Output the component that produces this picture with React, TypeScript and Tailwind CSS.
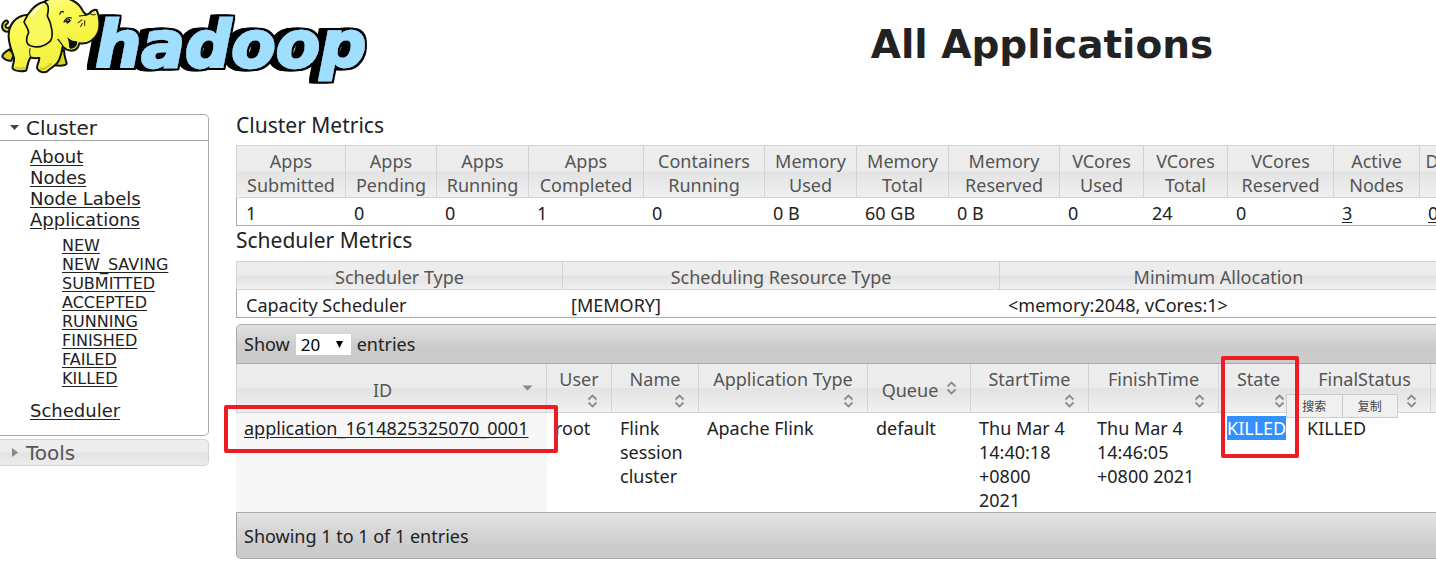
import type { ReactNode } from "react";

const clusterMetrics: { label: [string, string]; value: string; width: string; link?: boolean }[] = [
  { label: ["Apps", "Submitted"], value: "1", width: "w-[110px]" },
  { label: ["Apps", "Pending"], value: "0", width: "w-[91px]" },
  { label: ["Apps", "Running"], value: "0", width: "w-[92px]" },
  { label: ["Apps", "Completed"], value: "1", width: "w-[115px]" },
  { label: ["Containers", "Running"], value: "0", width: "w-[121px]" },
  { label: ["Memory", "Used"], value: "0 B", width: "w-[92px]" },
  { label: ["Memory", "Total"], value: "60 GB", width: "w-[92px]" },
  { label: ["Memory", "Reserved"], value: "0 B", width: "w-[111px]" },
  { label: ["VCores", "Used"], value: "0", width: "w-[84px]" },
  { label: ["VCores", "Total"], value: "24", width: "w-[84px]" },
  { label: ["VCores", "Reserved"], value: "0", width: "w-[106px]" },
  { label: ["Active", "Nodes"], value: "3", width: "w-[86px]", link: true },
  { label: ["Decommissioned", "Nodes"], value: "0", width: "w-[158px]", link: true },
  { label: ["Lost", "Nodes"], value: "0", width: "", link: true },
];

const schedulerMetrics = [
  { label: "Scheduler Type", value: "Capacity Scheduler", width: "w-[327px]" },
  { label: "Scheduling Resource Type", value: "[MEMORY]", width: "w-[437px]" },
  { label: "Minimum Allocation", value: "<memory:2048, vCores:1>", width: "w-[438px]" },
  { label: "Maximum Allocation", value: "<memory:8192, vCores:4>", width: "" },
];

const appColumns: { label: string; width: string; inline?: boolean; sorted?: boolean }[] = [
  { label: "ID", width: "w-[311px]", inline: true, sorted: true },
  { label: "User", width: "w-[65px]" },
  { label: "Name", width: "w-[87px]" },
  { label: "Application Type", width: "w-[169px]" },
  { label: "Queue", width: "w-[103px]", inline: true },
  { label: "StartTime", width: "w-[118px]" },
  { label: "FinishTime", width: "w-[130px]" },
  { label: "State", width: "w-[80px]" },
  { label: "FinalStatus", width: "w-[132px]" },
  { label: "Progress", width: "" },
];

const appStates = ["NEW", "NEW_SAVING", "SUBMITTED", "ACCEPTED", "RUNNING", "FINISHED", "FAILED", "KILLED"];

const headCell =
  "border-y border-r first:border-l border-[#d3d3d3] bg-[linear-gradient(#ededed_0%,#ececec_48%,#e3e3e3_52%,#f0f0f0_100%)] font-normal text-[#555]";
const valueCell = "h-7 border-b border-[#aaa] pt-[3px] pb-0 pl-2 first:border-l first:pl-[9px]";

function HadoopLogo() {
  return (
    <svg viewBox="0 0 1140 258" className="h-[86px] w-[380px] shrink-0" role="img" aria-label="hadoop">
      <defs>
        <linearGradient id="skin" x1="0" y1="0" x2="0.5" y2="1">
          <stop offset="0" stopColor="#ffffb8" />
          <stop offset="0.4" stopColor="#fbfb52" />
          <stop offset="1" stopColor="#efee3c" />
        </linearGradient>
        <filter id="extrude" x="-10%" y="-20%" width="120%" height="150%">
          <feMorphology in="SourceAlpha" operator="dilate" radius="7" result="d" />
          <feOffset in="d" dx="-6" result="d1" />
          <feOffset in="d" dx="-12" result="d2" />
          <feOffset in="d" dx="-18" result="d3" />
          <feOffset in="d" dx="-22" result="d4" />
          <feMerge>
            <feMergeNode in="d4" />
            <feMergeNode in="d3" />
            <feMergeNode in="d2" />
            <feMergeNode in="d1" />
            <feMergeNode in="d" />
            <feMergeNode in="SourceGraphic" />
          </feMerge>
        </filter>
      </defs>
      <text
        x="286"
        y="202"
        fontFamily="DejaVu Sans"
        fontWeight="700"
        fontStyle="italic"
        fontSize="194"
        fill="#a0deff"
        stroke="#a0deff"
        strokeWidth="7"
        filter="url(#extrude)"
      >
        hadoop
      </text>
      <g stroke="#111" strokeWidth="6" strokeLinejoin="round" strokeLinecap="round">
        <path d="M26 94C14 98 4 88 7 74C9 66 16 60 22 62C27 66 23 72 17 74C15 82 20 86 29 82" fill="#e6e23c" />
        <path d="M28 148C18 154 6 164 7 170C12 178 24 184 34 182L42 164Z" fill="#d9d527" />
        <path d="M170 160L192 150C192 168 198 182 200 190C200 198 178 198 164 196Z" fill="#d9d527" />
        <path
          d="M84 44C46 46 24 76 26 112C28 140 38 158 42 174C44 186 36 196 38 206C46 214 66 214 78 212C84 200 82 184 92 172C102 176 112 174 118 174C118 188 108 196 112 206C118 216 132 220 142 214C156 200 172 196 178 178C184 164 186 150 188 140C202 154 222 156 232 144C236 140 236 134 238 130C264 134 288 118 296 92C300 70 298 46 290 30C282 28 274 34 268 40C262 46 254 44 248 32C236 4 204 -8 176 -8C154 -8 140 0 132 6C112 8 96 26 84 44Z"
          fill="url(#skin)"
        />
        <path
          d="M134 6C110 10 84 36 72 66C80 82 86 88 86 98C76 118 78 134 94 138C112 144 132 140 150 124C162 112 156 72 142 48C146 28 148 14 134 6Z"
          fill="#f9f85c"
          strokeWidth="5"
        />
        <path d="M174 118C182 128 188 134 190 141" fill="none" strokeWidth="4" />
        <path d="M206 118C214 124 224 126 230 126C230 138 222 145 211 144C207 138 211 130 206 118Z" fill="#111" strokeWidth="4" />
        <path d="M203 114L210 122M268 40C272 44 282 46 286 44M238 48L258 46M234 68L246 60M242 80L247 70M254 76L254 62M92 172C88 160 88 152 90 146" fill="none" strokeWidth="3" />
        <path d="M180 42C180 36 186 32 190 36M192 66C196 56 204 50 214 54" fill="none" strokeWidth="4" />
        <path d="M196 64C200 56 210 56 212 62L204 70Z" fill="#111" strokeWidth="2" />
        <circle cx="204" cy="61" r="2" fill="#fff" stroke="none" />
      </g>
      <g fill="none" strokeLinecap="round">
        <path d="M96 48C104 32 114 22 126 16" stroke="#fff" strokeWidth="7" opacity=".7" />
        <path d="M48 204C56 207 64 206 72 204M122 206C132 210 142 202 152 192" stroke="#d2cc25" strokeWidth="7" />
      </g>
    </svg>
  );
}

function SortIcon({ sorted }: { sorted?: boolean }) {
  return (
    <svg viewBox="0 0 18 16" className="h-4 w-[18px] shrink-0" aria-hidden="true">
      {sorted ? (
        <path d="M4.500 5.500h10l-5 5z" fill="#888" />
      ) : (
        <path d="M5.500 6.500l4-4 4 4M5.500 9.500l4 4 4-4" fill="none" stroke="#8c8c8c" strokeWidth="1.8" />
      )}
    </svg>
  );
}

function Link({ children }: { children: ReactNode }) {
  return (
    <a href="#" className="underline underline-offset-2">
      {children}
    </a>
  );
}

function Sidebar() {
  return (
    <nav className="w-[209px] shrink-0 font-['DejaVu_Sans',sans-serif] text-lg leading-[21px]">
      <section className="h-[322px] rounded-r-[5px] border-y border-r border-[#aaa]">
        <h3 className="border-b border-[#aaa]">
          <button className="flex h-[25px] items-center gap-[7px] pl-[10px] text-xl">
            <svg viewBox="0 0 9 5" className="h-[5px] w-[9px]" aria-hidden="true">
              <path d="M0 0h9L4.500 5z" fill="#444" />
            </svg>
            Cluster
          </button>
        </h3>
        <ul className="pt-[5px] pl-[30px]">
          <li><Link>About</Link></li>
          <li><Link>Nodes</Link></li>
          <li><Link>Node Labels</Link></li>
          <li>
            <Link>Applications</Link>
            <ul className="pt-[6px] pb-[12px] pl-8 text-base leading-[19px]">
              {appStates.map((s) => (
                <li key={s}><Link>{s}</Link></li>
              ))}
            </ul>
          </li>
          <li><Link>Scheduler</Link></li>
        </ul>
      </section>
      <h3 className="mt-[3px] rounded-r-[5px] border-y border-r border-[#d3d3d3] bg-[linear-gradient(#ededed_0%,#ececec_48%,#e3e3e3_52%,#ececec_100%)] text-[#555]">
        <button className="flex h-[25px] items-center gap-2 pl-[12px] text-xl">
          <svg viewBox="0 0 6 9" className="h-[9px] w-[6px]" aria-hidden="true">
            <path d="M0 0v9l6-4.500z" fill="#888" />
          </svg>
          Tools
        </button>
      </h3>
    </nav>
  );
}

function ClusterTable() {
  return (
    <table className="w-full table-fixed border-separate border-spacing-0">
      <thead>
        <tr>
          {clusterMetrics.map((m) => (
            <th key={m.label.join()} className={`${headCell} ${m.width} px-0 pt-[3px]`}>
              {m.label[0]}
              <br />
              {m.label[1]}
            </th>
          ))}
        </tr>
      </thead>
      <tbody>
        <tr>
          {clusterMetrics.map((m) => (
            <td key={m.label.join()} className={valueCell}>
              {m.link ? <Link>{m.value}</Link> : m.value}
            </td>
          ))}
        </tr>
      </tbody>
    </table>
  );
}

function SchedulerTable() {
  return (
    <table className="w-full table-fixed border-separate border-spacing-0">
      <thead>
        <tr>
          {schedulerMetrics.map((m) => (
            <th key={m.label} className={`${headCell} ${m.width} h-[29px] pt-[3px]`}>
              {m.label}
            </th>
          ))}
        </tr>
      </thead>
      <tbody>
        <tr>
          {schedulerMetrics.map((m) => (
            <td key={m.label} className={valueCell}>{m.value}</td>
          ))}
        </tr>
      </tbody>
    </table>
  );
}

function SelectionPopup() {
  return (
    <div className="absolute -top-[19px] left-[67px] flex h-6 w-[112px] border border-[#ccc] bg-[#f0f0f0] font-['Noto_Sans_CJK_SC',sans-serif] text-xs leading-5 text-[#444]">
      <button className="flex-1 border-r border-[#ccc]">搜索</button>
      <button className="flex-1">复制</button>
    </div>
  );
}

function ApplicationsTable() {
  return (
    <table className="w-full table-fixed border-separate border-spacing-0">
      <thead>
        <tr>
          {appColumns.map((c) => (
            <th
              key={c.label}
              className={`h-[49px] border-r border-b border-[#d3d3d3] bg-[linear-gradient(#ededed_0%,#ececec_48%,#e3e3e3_52%,#f0f0f0_100%)] p-0 font-normal whitespace-nowrap text-[#555] first:border-l ${c.width}`}
            >
              {c.inline ? (
                <button className="flex w-full items-center px-[10px]">
                  <span className="flex-1 pt-[3px]">{c.label}</span>
                  <SortIcon sorted={c.sorted} />
                </button>
              ) : (
                <button className="flex w-full flex-col items-center pt-px">
                  <span>{c.label}</span>
                  <span className="flex h-5 items-center self-end pr-[10px]">
                    <SortIcon />
                  </span>
                </button>
              )}
            </th>
          ))}
        </tr>
      </thead>
      <tbody>
        <tr className="align-top [&>td]:pt-[3px] [&>td]:pr-4 [&>td]:pl-2">
          <td className="relative bg-[#f7f7f7]">
            <Link>application_1614825325070_0001</Link>
            <span className="pointer-events-none absolute -top-2 -left-3 z-10 h-12 w-[334px] rounded-xs border-4 border-[#ed1c24]" />
          </td>
          <td>root</td>
          <td>Flink session cluster</td>
          <td>Apache Flink</td>
          <td>default</td>
          <td>Thu Mar 4 14:40:18 +0800 2021</td>
          <td>Thu Mar 4 14:46:05 +0800 2021</td>
          <td className="relative">
            <mark className="inline-block bg-[#3390ff] text-white">KILLED</mark>
            <SelectionPopup />
            <span className="pointer-events-none absolute -top-[57px] left-[2px] z-10 h-[102px] w-[78px] rounded-xs border-4 border-[#ed1c24]" />
          </td>
          <td>KILLED</td>
          <td />
        </tr>
      </tbody>
    </table>
  );
}

export default function App() {
  return (
    <div className="min-h-screen overflow-hidden bg-white font-['Noto_Sans','Noto_Sans_CJK_SC',sans-serif] text-lg leading-6 text-[#222]">
      <div className="min-w-[1848px]">
        <header className="flex min-h-[114px] items-start">
          <HadoopLogo />
          <h1 className="flex-1 pt-[20px] pr-[144px] text-center font-['DejaVu_Sans',sans-serif] text-[39px] leading-[50px] font-bold">
            All Applications
          </h1>
        </header>
        <div className="flex items-start gap-[27px]">
          <Sidebar />
          <main className="min-w-0 flex-1">
            <h3 className="h-[31px] text-[21px] leading-[22px]">Cluster Metrics</h3>
            <ClusterTable />
            <h3 className="h-[35px] text-[21px] leading-7">Scheduler Metrics</h3>
            <SchedulerTable />
            <div className="mt-[6px] flex h-10 items-center gap-[6px] rounded-tl-[5px] border border-[#aaa] bg-[linear-gradient(#e0e0e0_0%,#cbcbcb_60%,#cbcbcb_100%)] pl-[7px]">
              <label htmlFor="page-size">Show</label>
              <span className="relative flex">
                <select
                  id="page-size"
                  defaultValue="20"
                  className="h-[21px] w-[55px] appearance-none bg-white pl-[5px] text-[17px] leading-[21px] text-black"
                >
                  <option>20</option>
                  <option>50</option>
                  <option>100</option>
                </select>
                <svg viewBox="0 0 7 7" className="pointer-events-none absolute top-[7px] right-2 size-[7px]" aria-hidden="true">
                  <path d="M0 0h7L3.500 7z" fill="#000" />
                </svg>
              </span>
              <span>entries</span>
            </div>
            <ApplicationsTable />
            <footer className="flex h-[47px] items-center rounded-bl-[5px] border border-[#aaa] bg-[linear-gradient(#e3e3e3_0%,#cbcbcb_75%,#cbcbcb_100%)] pl-[7px]">
              Showing 1 to 1 of 1 entries
            </footer>
          </main>
        </div>
      </div>
    </div>
  );
}
